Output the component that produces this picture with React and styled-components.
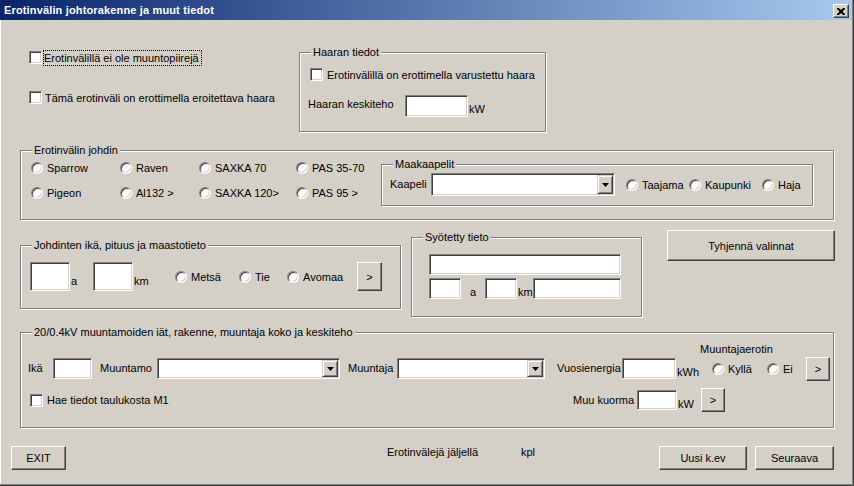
import React from 'react';
import styled, { createGlobalStyle } from 'styled-components';

const GlobalStyle = createGlobalStyle`
  html, body {
    margin: 0;
    padding: 0;
    background: #d4d0c8;
  }
  body {
    font-family: "Liberation Sans", Arial, sans-serif;
    font-size: 11px;
    color: #000;
  }
  * {
    box-sizing: border-box;
  }
`;

const CloseIcon = () => (
    <svg width="8" height="7" viewBox="0 0 8 7">
        <path d="M0 0h2l2 2 2-2h2v1L5.5 3.5 8 6v1H6L4 5 2 7H0V6l2.5-2.5L0 1z" fill="#000" />
    </svg>
);

const ArrowIcon = () => (
    <svg width="7" height="4" viewBox="0 0 7 4">
        <path d="M0 0h7L3.5 4z" fill="#000" />
    </svg>
);

const Checkbox = ({ label, gap = 1, focus, width, margin }) => (
    <CheckRow $gap={gap} $width={width} $margin={margin}>
        <CheckBox />
        <CheckLabel $focus={focus}>{label}</CheckLabel>
    </CheckRow>
);

const Radio = ({ label, width, margin }) => (
    <RadioItem $width={width} $margin={margin}>
        <RadioDot />
        <span>{label}</span>
    </RadioItem>
);

const Combo = ({ width, height = 21 }) => (
    <ComboBox $width={width} $height={height}>
        <ComboButton>
            <ArrowIcon />
        </ComboButton>
    </ComboBox>
);

const App = () => {
    return (
        <>
            <GlobalStyle />
            <Window>
                <TitleBar>
                    <span>Erotinvälin johtorakenne ja muut tiedot</span>
                    <CloseButton>
                        <CloseIcon />
                    </CloseButton>
                </TitleBar>
                <Content>
                    <TopRow>
                        <LeftCol>
                            <Checkbox label="Erotinvälillä ei ole muuntopiirejä" focus />
                            <Checkbox label="Tämä erotinväli on erottimella eroitettava haara" gap={2} />
                        </LeftCol>
                        <Frame $width={247} $height={80} $top={2} $pad="14px 0 0 8px">
                            <Caption>Haaran tiedot</Caption>
                            <Checkbox label="Erotinvälillä on erottimella varustettu haara" gap={3} margin="0 0 0 2px" />
                            <FieldRow $top={13}>
                                <FieldLabel $width={97} $raised>Haaran keskiteho</FieldLabel>
                                <TextBox $width={63} $height={22} />
                                <Unit $width={20} $bottom={2}>kW</Unit>
                            </FieldRow>
                        </Frame>
                    </TopRow>

                    <Frame $width={814} $height={70} $top={18} $pad="9px 0 0 10px" $row>
                        <Caption>Erotinvälin johdin</Caption>
                        <RadioGrid>
                            <Radio label="Sparrow" />
                            <Radio label="Raven" />
                            <Radio label="SAXKA 70" />
                            <Radio label="PAS 35-70" />
                            <Radio label="Pigeon" />
                            <Radio label="Al132 >" />
                            <Radio label="SAXKA 120>" />
                            <Radio label="PAS 95 >" />
                        </RadioGrid>
                        <Frame $width={432} $height={42} $top={4} $pad="8px 0 0 8px" $row>
                            <Caption>Maakaapelit</Caption>
                            <FieldLabel $width={41}>Kaapeli</FieldLabel>
                            <Combo width={184} height={23} />
                            <Radio label="Taajama" width={63} margin="0 0 0 11px" />
                            <Radio label="Kaupunki" width={73} />
                            <Radio label="Haja" />
                        </Frame>
                    </Frame>

                    <MiddleRow>
                        <Frame $width={381} $height={64} $top={15} $pad="16px 0 0 9px" $row>
                            <Caption>Johdinten ikä, pituus ja maastotieto</Caption>
                            <TextBox $width={40} $height={29} />
                            <Unit $width={23} $bottom={4}>a</Unit>
                            <TextBox $width={40} $height={29} />
                            <Unit $width={42} $bottom={4}>km</Unit>
                            <Radio label="Metsä" width={64} />
                            <Radio label="Tie" width={48} />
                            <Radio label="Avomaa" width={70} />
                            <Button $width={25} $height={29}>&gt;</Button>
                        </Frame>
                        <Frame $width={231} $height={80} $top={7} $left={10} $pad="16px 0 0 17px">
                            <Caption>Syötetty tieto</Caption>
                            <TextBox $width={192} $height={21} />
                            <FieldRow $top={3}>
                                <TextBox $width={32} $height={21} />
                                <Unit $width={24} $bottom={1} $center>a</Unit>
                                <TextBox $width={32} $height={21} />
                                <Unit $width={16} $bottom={1}>km</Unit>
                                <TextBox $width={88} $height={21} />
                            </FieldRow>
                        </Frame>
                        <Button $width={168} $height={31} $left={25}>Tyhjennä valinnat</Button>
                    </MiddleRow>

                    <Frame $width={814} $height={96} $top={15} $pad="9px 0 0 7px">
                        <Caption>20/0.4kV muuntamoiden iät, rakenne, muuntaja koko ja keskiteho</Caption>
                        <StationRow>
                            <FieldLabel $width={25}>Ikä</FieldLabel>
                            <TextBox $width={39} $height={21} />
                            <FieldLabel $width={57} $left={8}>Muuntamo</FieldLabel>
                            <Combo width={183} />
                            <FieldLabel $width={49} $left={8}>Muuntaja</FieldLabel>
                            <Combo width={148} />
                            <FieldLabel $width={65} $left={12}>Vuosienergia</FieldLabel>
                            <TextBox $width={54} $height={21} />
                            <Unit $width={24} $bottom={1}>kWh</Unit>
                            <SwitchGroup>
                                <GroupLabel>Muuntajaerotin</GroupLabel>
                                <GroupRow>
                                    <Radio label="Kyllä" width={55} margin="0 0 0 12px" />
                                    <Radio label="Ei" width={39} />
                                    <Button $width={24} $height={24}>&gt;</Button>
                                </GroupRow>
                            </SwitchGroup>
                        </StationRow>
                        <LoadRow>
                            <Checkbox label="Hae tiedot taulukosta M1" gap={3} width={543} margin="0 0 0 2px" />
                            <FieldLabel $width={64}>Muu kuorma</FieldLabel>
                            <TextBox $width={40} $height={20} />
                            <Unit $width={24} $bottom={0}>kW</Unit>
                            <Button $width={24} $height={24}>&gt;</Button>
                        </LoadRow>
                    </Frame>
                </Content>

                <Footer>
                    <Button $width={55} $height={24}>EXIT</Button>
                    <Info $width={134} $left={321}>Erotinvälejä jäljellä</Info>
                    <Info>kpl</Info>
                    <Button $width={88} $height={24} $auto>Uusi k.ev</Button>
                    <Button $width={79} $height={24} $left={8}>Seuraava</Button>
                </Footer>
            </Window>
        </>
    );
};

const Window = styled.div`
  width: 854px;
  height: 486px;
  display: flex;
  flex-direction: column;
  background: #d4d0c8;
  overflow: hidden;
  box-shadow: inset -1px -1px 0 #404040, inset -2px -2px 0 #808080, inset 1px 0 0 #ffffff;
`;

const TitleBar = styled.div`
  flex: none;
  height: 20px;
  margin-right: 2px;
  padding: 0 3px 0 4px;
  display: flex;
  align-items: flex-start;
  justify-content: space-between;
  background: linear-gradient(to right, #0a246a, #a6caf0);
  color: #ffffff;
  font-weight: bold;
  font-size: 11px;

  span {
    line-height: 20px;
    letter-spacing: 0.15px;
  }
`;

const CloseButton = styled.div`
  width: 16px;
  height: 14px;
  margin-top: 4px;
  display: flex;
  align-items: center;
  justify-content: center;
  background: #d4d0c8;
  border: 1px solid;
  border-color: #ffffff #404040 #404040 #ffffff;
  box-shadow: inset -1px -1px 0 #808080;
`;

const Content = styled.div`
  display: flex;
  flex-direction: column;
  padding-left: 20px;
`;

const TopRow = styled.div`
  display: flex;
  margin-top: 30px;
`;

const LeftCol = styled.div`
  width: 279px;
  padding-left: 9px;
  display: flex;
  flex-direction: column;
  gap: 25px;
`;

const MiddleRow = styled.div`
  display: flex;
  align-items: flex-start;
  margin-top: 10px;
`;

const Frame = styled.div`
  position: relative;
  flex: none;
  width: ${p => p.$width}px;
  height: ${p => p.$height}px;
  margin-top: ${p => p.$top || 0}px;
  margin-left: ${p => p.$left || 0}px;
  padding: ${p => p.$pad};
  display: flex;
  flex-direction: ${p => (p.$row ? 'row' : 'column')};
  align-items: ${p => (p.$row ? 'center' : 'stretch')};
  align-content: flex-start;
  flex-wrap: ${p => (p.$row ? 'wrap' : 'nowrap')};
  border: 1px solid #808080;
  box-shadow: inset 1px 1px 0 #ffffff, 1px 1px 0 #ffffff;
`;

const Caption = styled.span`
  position: absolute;
  top: -8px;
  left: 11px;
  padding: 0 2px;
  background: #d4d0c8;
  line-height: 14px;
  white-space: nowrap;
`;

const CheckRow = styled.div`
  flex: none;
  display: flex;
  align-items: center;
  height: 15px;
  gap: ${p => p.$gap}px;
  width: ${p => (p.$width ? `${p.$width}px` : 'auto')};
  margin: ${p => p.$margin || 0};
`;

const CheckBox = styled.span`
  flex: none;
  width: 13px;
  height: 13px;
  background: #ffffff;
  border: 1px solid;
  border-color: #808080 #ffffff #ffffff #808080;
  box-shadow: inset 1px 1px 0 #404040, inset -1px -1px 0 #d4d0c8;
`;

const CheckLabel = styled.span`
  line-height: 14px;
  padding: 0 2px 0 0;
  border: 1px dotted ${p => (p.$focus ? '#000000' : 'transparent')};
  white-space: nowrap;
`;

const RadioGrid = styled.div`
  flex: none;
  align-self: flex-start;
  display: grid;
  grid-template-columns: 89px 79px 97px 85px;
  grid-auto-rows: 16px;
  row-gap: 9px;
`;

const RadioItem = styled.div`
  flex: none;
  display: flex;
  align-items: center;
  gap: 4px;
  height: 16px;
  width: ${p => (p.$width ? `${p.$width}px` : 'auto')};
  margin: ${p => p.$margin || 0};
  white-space: nowrap;
`;

const RadioDot = styled.span`
  flex: none;
  width: 12px;
  height: 12px;
  border-radius: 50%;
  background: #ffffff;
  border: 1px solid;
  border-color: #808080 #ffffff #ffffff #808080;
  box-shadow: inset 1px 1px 0 #404040, inset -1px -1px 0 #d4d0c8;
`;

const FieldRow = styled.div`
  display: flex;
  align-items: center;
  margin-top: ${p => p.$top}px;
`;

const FieldLabel = styled.span`
  flex: none;
  width: ${p => p.$width}px;
  margin-left: ${p => p.$left || 0}px;
  line-height: ${p => (p.$raised ? '13px' : '21px')};
  align-self: ${p => (p.$raised ? 'flex-start' : 'auto')};
  margin-top: ${p => (p.$raised ? '3px' : '0')};
  white-space: nowrap;
`;

const TextBox = styled.div`
  flex: none;
  width: ${p => p.$width}px;
  height: ${p => p.$height}px;
  background: #ffffff;
  border: 1px solid;
  border-color: #808080 #ffffff #ffffff #808080;
  box-shadow: inset 1px 1px 0 #404040, inset -1px -1px 0 #d4d0c8;
`;

const Unit = styled.span`
  flex: none;
  width: ${p => p.$width}px;
  padding-left: ${p => (p.$center ? 0 : 1)}px;
  text-align: ${p => (p.$center ? 'center' : 'left')};
  line-height: 12px;
  align-self: flex-end;
  margin-bottom: ${p => p.$bottom}px;
`;

const ComboBox = styled.div`
  flex: none;
  width: ${p => p.$width}px;
  height: ${p => p.$height}px;
  padding: 1px;
  display: flex;
  justify-content: flex-end;
  background: #ffffff;
  border: 1px solid;
  border-color: #808080 #ffffff #ffffff #808080;
  box-shadow: inset 1px 1px 0 #404040, inset -1px -1px 0 #d4d0c8;
`;

const ComboButton = styled.div`
  width: 16px;
  height: 100%;
  display: flex;
  align-items: center;
  justify-content: center;
  background: #d4d0c8;
  border: 1px solid;
  border-color: #d4d0c8 #404040 #404040 #d4d0c8;
  box-shadow: inset 1px 1px 0 #ffffff, inset -1px -1px 0 #808080;
`;

const Button = styled.div`
  flex: none;
  width: ${p => p.$width}px;
  height: ${p => p.$height}px;
  margin-left: ${p => (p.$auto ? 'auto' : `${p.$left || 0}px`)};
  display: flex;
  align-items: center;
  justify-content: center;
  background: #d4d0c8;
  border: 1px solid;
  border-color: #ffffff #404040 #404040 #ffffff;
  box-shadow: inset -1px -1px 0 #808080;
  white-space: nowrap;
`;

const StationRow = styled.div`
  display: flex;
  align-items: flex-end;
`;

const SwitchGroup = styled.div`
  display: flex;
  flex-direction: column;
`;

const GroupLabel = styled.span`
  line-height: 14px;
  margin-bottom: 2px;
  white-space: nowrap;
`;

const GroupRow = styled.div`
  display: flex;
  align-items: center;
  height: 21px;
`;

const LoadRow = styled.div`
  display: flex;
  align-items: center;
  height: 20px;
  margin-top: 11px;

  ${FieldLabel} {
    line-height: 20px;
  }
`;

const Footer = styled.div`
  display: flex;
  align-items: flex-start;
  margin-top: 18px;
  padding: 0 20px 0 11px;
`;

const Info = styled.span`
  flex: none;
  width: ${p => (p.$width ? `${p.$width}px` : 'auto')};
  margin-left: ${p => p.$left || 0}px;
  line-height: 13px;
  white-space: nowrap;
`;

export default App;
